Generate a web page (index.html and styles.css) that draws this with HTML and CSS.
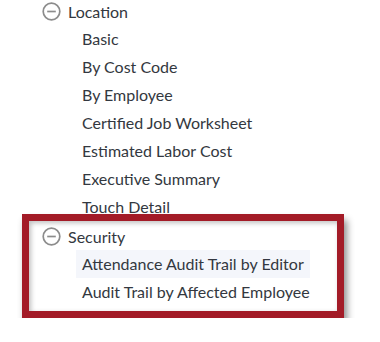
FILE: index.html
```
<!DOCTYPE html>
<html lang="en">
<head>
  <meta charset="UTF-8">
  <title>Reports</title>
  <link rel="stylesheet" href="styles.css">
</head>
<body>
  <div class="tree">
    <div class="group">
      <div class="group-head">
        <svg class="toggle" width="19" height="19" viewBox="0 0 19 19"><circle cx="9.5" cy="9.5" r="8.3" fill="none" stroke="#8c8c8c" stroke-width="1.7"/><line x1="5.2" y1="9.5" x2="13.8" y2="9.5" stroke="#8c8c8c" stroke-width="1.7"/></svg>
        <span>Location</span>
      </div>
      <div class="item">Basic</div>
      <div class="item">By Cost Code</div>
      <div class="item">By Employee</div>
      <div class="item">Certified Job Worksheet</div>
      <div class="item">Estimated Labor Cost</div>
      <div class="item">Executive Summary</div>
      <div class="item">Touch Detail</div>
    </div>

    <div class="group marked">
      <div class="group-head">
        <svg class="toggle" width="19" height="19" viewBox="0 0 19 19"><circle cx="9.5" cy="9.5" r="8.3" fill="none" stroke="#8c8c8c" stroke-width="1.7"/><line x1="5.2" y1="9.5" x2="13.8" y2="9.5" stroke="#8c8c8c" stroke-width="1.7"/></svg>
        <span>Security</span>
      </div>
      <div class="item active">Attendance Audit Trail by Editor</div>
      <div class="item">Audit Trail by Affected Employee</div>
    </div>
  </div>
</body>
</html>
```

FILE: styles.css
```
* {
  box-sizing: border-box;
}

body {
  margin: 0;
  font-family: Lato, 'Open Sans', sans-serif;
  background: #fff;
  color: #333840;
  font-size: 16px;
}

.tree {
  margin-top: -3px;
}

.group-head {
  display: flex;
  align-items: center;
  gap: 7px;
  height: 28px;
  padding-left: 42px;
}

.toggle {
  flex: none;
}

.item {
  height: 28px;
  line-height: 28px;
  padding-left: 82px;
}

.marked {
  margin: -7px 0 0 22px;
  width: 322px;
  height: 104px;
  border: 7px solid #a31b27;
  box-shadow: 3px 6px 7px rgba(0, 0, 0, 0.45), inset 2px 2px 5px rgba(0, 0, 0, 0.25);
  padding-top: 1px;
}

.marked .group-head {
  padding-left: 13px;
}

.marked .item {
  margin-left: 47px;
  padding-left: 6px;
  width: 234px;
}

.marked .item.active {
  background: #f4f6fb;
}
```
